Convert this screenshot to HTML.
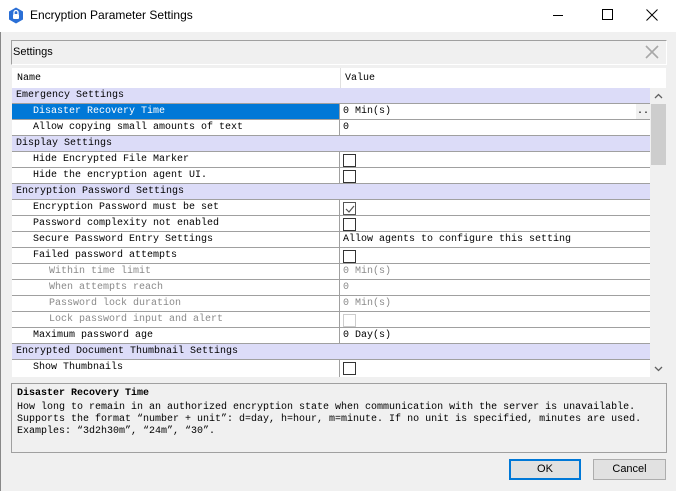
<!DOCTYPE html>
<html><head><meta charset="utf-8"><style>
*{margin:0;padding:0;box-sizing:border-box}
body{width:676px;height:491px;background:#f0f0f0;position:relative;overflow:hidden;font-family:"Liberation Mono","Noto Sans CJK SC",monospace;font-size:10px;color:#000}
.abs{position:absolute}
.title{left:0;top:0;width:676px;height:32px;background:#fff;font-family:"Liberation Sans",sans-serif;font-size:12px}
.row{position:absolute;left:12px;width:638px;height:16px;border-bottom:1px solid #a0a0a0;background:#fff;line-height:16px;white-space:nowrap}
.row .n{position:absolute;left:0;top:0;width:328px;height:15px;border-right:1px solid #a0a0a0;padding-left:21px}
.row.g .n{padding-left:4px;border-right:none}
.row.s .n{padding-left:37px}
.row .v{position:absolute;left:331px;top:0}
.g{background:#dcdcf8}
.cb{position:absolute;left:331px;top:2px;width:13px;height:13px;border:1px solid #333;background:#fff}
.dis{color:#8a8a8a}
.btn{position:absolute;height:21px;border:1px solid #adadad;background:#e1e1e1;font-family:"Liberation Sans",sans-serif;font-size:11px;text-align:center;line-height:19px}
</style></head><body>
<div class="abs" style="left:0;top:0;width:1px;height:491px;background:#888"></div>
<div class="abs title">
<svg class="abs" style="left:8px;top:7px" width="16" height="17" viewBox="0 0 16 17"><path d="M8 0.5 L15 4.5 L15 12.5 L8 16.5 L1 12.5 L1 4.5 Z" fill="#2a6fd6"/><rect x="5" y="7" width="6" height="5" rx="1" fill="#fff"/><path d="M6 7 V5.5 a2 2 0 0 1 4 0 V7" stroke="#fff" stroke-width="1.3" fill="none"/></svg>
<div class="abs" style="left:30px;top:8px">Encryption Parameter Settings</div>
<div class="abs" style="left:553px;top:15px;width:10px;height:1px;background:#000"></div>
<div class="abs" style="left:602px;top:9px;width:11px;height:11px;border:1px solid #000"></div>
<svg class="abs" style="left:646px;top:9px" width="12" height="12"><path d="M0.5 0.5 L11.5 11.5 M11.5 0.5 L0.5 11.5" stroke="#000" stroke-width="1"/></svg>
</div>
<div class="abs" style="left:11px;top:40px;width:656px;height:25px;border:1px solid #a0a0a0;border-right-color:#fff;border-bottom-color:#fff;background:#f0f0f0;font-family:'Liberation Sans',sans-serif;font-size:11px;line-height:23px;padding-left:1px">Settings</div>
<svg class="abs" style="left:645px;top:45px" width="14" height="14"><path d="M1 1 L13 13 M13 1 L1 13" stroke="#a8a8a8" stroke-width="1.6"/></svg>
<div class="abs" style="left:12px;top:68px;width:654px;height:20px;background:#fff"></div>
<div class="abs" style="left:17px;top:73px">Name</div>
<div class="abs" style="left:340px;top:68px;width:1px;height:20px;background:#e0e0e0"></div>
<div class="abs" style="left:345px;top:73px">Value</div>

<div class="row g" style="top:88px"><div class="n">Emergency Settings</div></div>
<div class="row" style="top:104px"><div class="n" style="background:#0078d7;color:#fff">Disaster Recovery Time</div><div class="v">0 Min(s)</div><div class="abs" style="left:624px;top:0;width:14px;height:15px;background:#f0f0f0;text-align:center">..</div></div>
<div class="row" style="top:120px"><div class="n">Allow copying small amounts of text</div><div class="v">0</div></div>
<div class="row g" style="top:136px"><div class="n">Display Settings</div></div>
<div class="row" style="top:152px"><div class="n">Hide Encrypted File Marker</div><div class="cb"></div></div>
<div class="row" style="top:168px"><div class="n">Hide the encryption agent UI.</div><div class="cb"></div></div>
<div class="row g" style="top:184px"><div class="n">Encryption Password Settings</div></div>
<div class="row" style="top:200px"><div class="n">Encryption Password must be set</div><div class="cb" style="border-color:#555"><svg class="abs" style="left:1px;top:1px" width="10" height="10"><path d="M1 5 L4 8 L9 2" stroke="#555" fill="none" stroke-width="1.2"/></svg></div></div>
<div class="row" style="top:216px"><div class="n">Password complexity not enabled</div><div class="cb"></div></div>
<div class="row" style="top:232px"><div class="n">Secure Password Entry Settings</div><div class="v">Allow agents to configure this setting</div></div>
<div class="row" style="top:248px"><div class="n">Failed password attempts</div><div class="cb"></div></div>
<div class="row s dis" style="top:264px"><div class="n">Within time limit</div><div class="v">0 Min(s)</div></div>
<div class="row s dis" style="top:280px"><div class="n">When attempts reach</div><div class="v">0</div></div>
<div class="row s dis" style="top:296px"><div class="n">Password lock duration</div><div class="v">0 Min(s)</div></div>
<div class="row s dis" style="top:312px"><div class="n">Lock password input and alert</div><div class="cb" style="border-color:#ccc"></div></div>
<div class="row" style="top:328px"><div class="n">Maximum password age</div><div class="v">0 Day(s)</div></div>
<div class="row g" style="top:344px"><div class="n">Encrypted Document Thumbnail Settings</div></div>
<div class="row" style="top:360px;height:17px;border-bottom:none"><div class="n" style="height:17px">Show Thumbnails</div><div class="cb"></div></div>

<div class="abs" style="left:651px;top:88px;width:15px;height:289px;background:#f0f0f0"></div>
<div class="abs" style="left:651px;top:104px;width:15px;height:61px;background:#cdcdcd"></div>
<svg class="abs" style="left:654px;top:93px" width="9" height="6"><path d="M1 5 L4.5 1.5 L8 5" stroke="#606060" fill="none" stroke-width="1.3"/></svg>
<svg class="abs" style="left:654px;top:366px" width="9" height="6"><path d="M1 1 L4.5 4.5 L8 1" stroke="#606060" fill="none" stroke-width="1.3"/></svg>

<div class="abs" style="left:11px;top:383px;width:656px;height:70px;border:1px solid #a0a0a0;background:#f0f0f0;padding:4px 0 0 5px;line-height:12px;white-space:pre"><div style="font-weight:bold;margin-bottom:2px">Disaster Recovery Time</div><div>How long to remain in an authorized encryption state when communication with the server is unavailable.
Supports the format “number + unit”: d=day, h=hour, m=minute. If no unit is specified, minutes are used.
Examples: “3d2h30m”, “24m”, “30”.</div></div>

<div class="btn" style="left:509px;top:459px;width:72px;border:2px solid #0078d7;line-height:17px">OK</div>
<div class="btn" style="left:593px;top:459px;width:73px">Cancel</div>
</body></html>
